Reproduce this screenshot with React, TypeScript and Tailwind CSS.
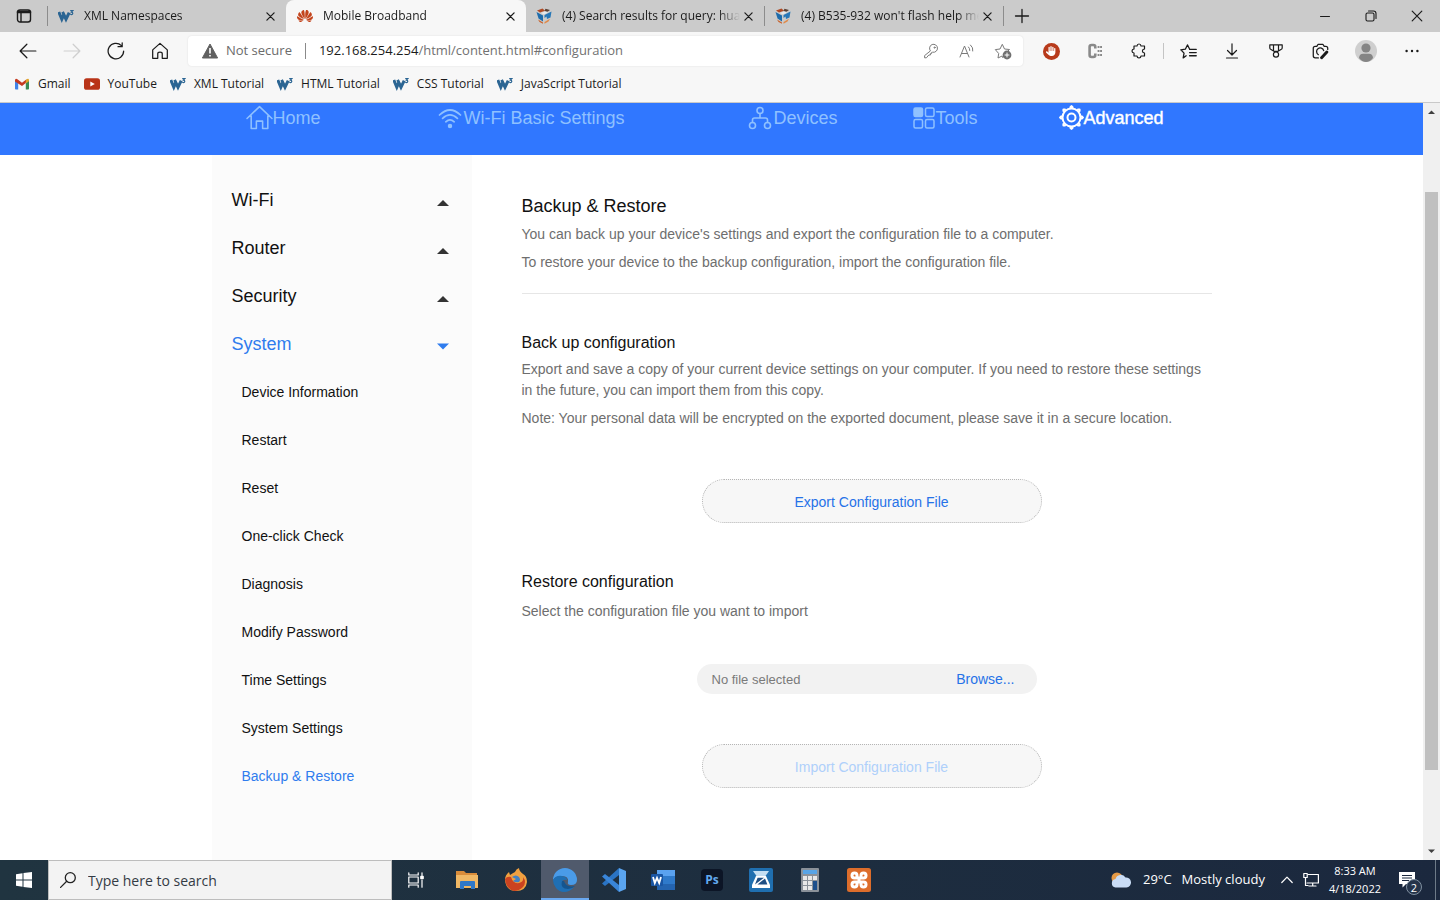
import type { ReactNode } from 'react';
import { FaHand } from 'react-icons/fa6';
import { SiHuawei } from 'react-icons/si';

const uiFont = 'font-["Open_Sans","Noto_Sans",sans-serif]';

type IconProps = { children: ReactNode; className?: string; box?: string; width?: number };

function Line({ children, className = 'size-4', box = '0 0 16 16', width = 1 }: IconProps) {
  return (
    <svg
      aria-hidden="true"
      viewBox={box}
      className={`shrink-0 ${className}`}
      fill="none"
      stroke="currentColor"
      strokeWidth={width}
      strokeLinecap="round"
      strokeLinejoin="round"
    >
      {children}
    </svg>
  );
}

function W3Icon() {
  return (
    <svg aria-hidden="true" viewBox="0 0 16 16" className="size-4 shrink-0" fill="none" stroke="#2b6593">
      <path d="M0.8 4 L3.8 11.2 L5.8 6.6 L8 11.2 L11.2 4.6" strokeWidth="3" />
      <path d="M4.4 4 L6.4 8" strokeWidth="2.4" />
      <path d="M12.2 2.6 H14.8 L13.4 4.2 C15.4 4.4 15 6.6 13.4 6.6 L12.2 6.2" strokeWidth="1.2" />
    </svg>
  );
}

function CubeIcon() {
  return (
    <svg aria-hidden="true" viewBox="0 0 16 16" className="size-4 shrink-0">
      <path d="M1 2.5 L6.5 0.5 L9 2.8 L4 4.6 Z" fill="#b04a24" />
      <path d="M9.5 0.8 L14 2 L11.5 3.8 L8.5 3 Z" fill="#5a4034" />
      <path d="M0.5 4 L7 7.5 V13.5 L2.5 10.5 Z" fill="#1f6cab" />
      <path d="M5 5 L9 3.6 L12 4.6 L8 6.6 Z" fill="#e6e9ec" />
      <path d="M8.5 7 L15.5 3.5 L14.5 9.5 L11 11 L10.5 8.5 L8.5 10 Z" fill="#2878b8" />
      <path d="M2 11.5 L7 14.5 V15.8 L3.5 14 Z" fill="#c8622c" />
      <path d="M8.5 14 L14 10.8 L12.5 13.5 L8.5 15.8 Z" fill="#e08a4a" />
    </svg>
  );
}

function CloseGlyph({ className = 'size-[9px]', width = 1.4 }: { className?: string; width?: number }) {
  return (
    <Line box="0 0 10 10" className={className} width={width}>
      <path d="M1 1 L9 9 M9 1 L1 9" />
    </Line>
  );
}

type TabProps = { icon: ReactNode; title: string; active?: boolean; className: string };

function Tab({ icon, title, active = false, className }: TabProps) {
  return (
    <div
      role="tab"
      aria-selected={active}
      className={`flex h-8 min-w-0 items-center pr-2 ${active ? 'rounded-t-lg bg-[#f7f7f7]' : ''} ${className}`}
    >
      {icon}
      <span className="ml-2.5 min-w-0 flex-1 overflow-hidden whitespace-nowrap [mask-image:linear-gradient(to_right,black_88%,transparent)]">
        {title}
      </span>
      <button aria-label={`Close ${title}`} className="flex size-4 items-center justify-center">
        <CloseGlyph />
      </button>
    </div>
  );
}

function TabSeparator() {
  return <span className="h-5 w-px shrink-0 bg-[#8c8c8c]" />;
}

function TabStrip() {
  return (
    <div className="flex h-8 items-center bg-[#cbcbcb] text-[12px] text-[#1b1b1b]">
      <button aria-label="Tab actions" className="flex w-[47px] justify-center">
        <Line width={1.4}>
          <rect x="1.5" y="2" width="13" height="12" rx="2.5" />
          <path d="M2 4 H14" strokeWidth="2.6" />
          <path d="M5 5 V13.5" />
        </Line>
      </button>
      <TabSeparator />
      <Tab icon={<W3Icon />} title="XML Namespaces" className="w-[238px] pl-2.5" />
      <Tab
        active
        icon={<SiHuawei aria-hidden="true" className="size-4 shrink-0 text-[#c3441c]" />}
        title="Mobile Broadband"
        className="w-[240px] pl-[11px]"
      />
      <Tab icon={<CubeIcon />} title="(4) Search results for query: huaw" className="w-[238px] pl-2.5" />
      <TabSeparator />
      <Tab icon={<CubeIcon />} title="(4) B535-932 won't flash help me" className="w-[238px] pl-2.5" />
      <TabSeparator />
      <button aria-label="New tab" className="flex w-9 justify-center">
        <Line width={1.3}>
          <path d="M8 1.5 V14.5 M1.5 8 H14.5" />
        </Line>
      </button>
      <div className="ml-auto flex items-center">
        <button aria-label="Minimize" className="flex w-[46px] justify-center">
          <Line>
            <path d="M3.5 8.5 H12.5" />
          </Line>
        </button>
        <button aria-label="Restore window" className="flex w-[46px] justify-center">
          <Line width={1.1}>
            <rect x="3" y="5" width="8" height="8" rx="1.5" />
            <path d="M5.5 3 H10.5 Q13 3 13 5.5 V10.5" />
          </Line>
        </button>
        <button aria-label="Close window" className="flex w-[46px] justify-center">
          <CloseGlyph className="size-3" width={1} />
        </button>
      </div>
    </div>
  );
}

function ToolButton({ label, children, className = 'w-11' }: { label: string; children: ReactNode; className?: string }) {
  return (
    <button aria-label={label} className={`flex h-8 shrink-0 items-center justify-center ${className}`}>
      {children}
    </button>
  );
}

function Toolbar() {
  return (
    <div className="flex h-[38px] items-center bg-[#f7f7f7] pl-1.5 text-[#1b1b1b]">
      <ToolButton label="Back">
        <Line className="size-[18px]" width={1.1}>
          <path d="M1 8 H15 M7 2 L1 8 L7 14" />
        </Line>
      </ToolButton>
      <ToolButton label="Forward">
        <Line className="size-[18px] text-[#cfcfcf]" width={1.1}>
          <path d="M1 8 H15 M9 2 L15 8 L9 14" />
        </Line>
      </ToolButton>
      <ToolButton label="Refresh">
        <Line className="size-[18px]" width={1.1}>
          <path d="M14.8 8 A6.9 6.9 0 1 1 12.8 3.2 M13.5 0.7 V4.2 H9.8" />
        </Line>
      </ToolButton>
      <ToolButton label="Home">
        <Line className="size-[18px]" width={1.1}>
          <path d="M1.5 7 L8 1.2 L14.5 7 V14.5 H10 V10.5 Q10 9 8 9 Q6 9 6 10.5 V14.5 H1.5 Z" />
        </Line>
      </ToolButton>
      <div className="ml-1.5 flex h-[30px] flex-1 items-center rounded bg-white pr-0.5 pl-3.5 text-[13px] shadow-[0_0_2px_#dddddd]">
        <svg aria-hidden="true" viewBox="0 0 16 16" className="size-4 shrink-0">
          <path d="M8 1 L15.6 15 H0.4 Z" fill="#606060" stroke="#606060" strokeLinejoin="round" />
          <path d="M8 5 V10.5 M8 12 V13.5" stroke="white" strokeWidth="1.6" />
        </svg>
        <span className="ml-2 whitespace-nowrap text-[#6b6b6b]">Not secure</span>
        <span className="mx-[13px] h-4 w-px bg-[#8a8a8a]" />
        <label htmlFor="address" className="whitespace-nowrap">
          192.168.254.254
        </label>
        <input
          id="address"
          type="text"
          defaultValue="/html/content.html#configuration"
          className="min-w-0 flex-1 bg-transparent text-[#717171] outline-none"
        />
        <div className="flex text-[#7a7a7a]">
          <ToolButton label="Saved passwords" className="w-9">
            <Line>
              <path d="M7.2 7.6 A4 4 0 1 1 9.6 9.2 L8.6 9.4 V10.6 H7.4 V12 H5.8 L3.4 14.8 H1.6 V13 Z" />
              <circle cx="11.6" cy="4.6" r="0.6" />
            </Line>
          </ToolButton>
          <ToolButton label="Read aloud" className="w-9">
            <Line>
              <path d="M1 14 L5.5 3 L10 14 M2.6 10.5 H8.4 M9.5 4 Q11 5.5 10.8 7.5 M11.5 2 Q14.5 4.5 13.8 8" />
            </Line>
          </ToolButton>
          <ToolButton label="Add to favorites" className="w-9">
            <svg aria-hidden="true" viewBox="0 0 18 18" className="size-[18px]" fill="none" stroke="currentColor">
              <path
                d="M9 16 L8 14 L4 16 L4.7 11.5 L1.3 7.6 L6 7 L8.3 2.3 L10.5 7 L15.5 7.5 L14 9"
                strokeLinejoin="round"
              />
              <circle cx="13" cy="13" r="4.4" fill="#6f6f6f" stroke="none" />
              <path d="M13 10.6 V15.4 M10.6 13 H15.4" stroke="white" />
            </svg>
          </ToolButton>
        </div>
      </div>
      <div className="flex items-center pl-1.5">
        <ToolButton label="Ad blocker">
          <span className="flex size-[17px] items-center justify-center rounded-full bg-[#b83a1b]">
            <FaHand aria-hidden="true" className="size-[10px] text-white" />
          </span>
        </ToolButton>
        <ToolButton label="Clipboard extension">
          <svg aria-hidden="true" viewBox="0 0 16 16" className="size-4" fill="none" stroke="#8a8a8a">
            <path
              d="M8.3 5.5 V4 Q8.3 2 6.3 2 H4.6 Q2.6 2 2.6 4 V12 Q2.6 14 4.6 14 H6.3 Q8.3 14 8.3 12 V10.5"
              strokeWidth="2.6"
            />
            <path d="M10.6 4 H15 M10.6 8 H15 M10.6 12 H15" strokeWidth="2" strokeDasharray="1.9 0.6" />
          </svg>
        </ToolButton>
        <ToolButton label="Extensions">
          <Line width={1.2}>
            <path d="M4.5 3 H6 Q6.2 1 8 1 Q9.8 1 10 3 H13.5 V6 Q11.4 6.2 11.4 8 Q11.4 9.8 13.5 10 V13 H10 Q9.8 15 8 15 Q6.2 15 6 13 H3 V10 Q1 9.8 1 8 Q1 6.2 3 6 V3 Z" />
          </Line>
        </ToolButton>
        <span className="mx-0.5 h-4 w-px bg-[#c4c4c4]" />
        <ToolButton label="Favorites">
          <Line className="size-[17px]" width={1.2}>
            <path d="M5.8 12 L3 14 L3.8 9.5 L0.8 6.4 L5 5.8 L7 1.8 L9 5.6 M9 6 H15.3 M9 9 H15.3 M9 12 H15.3" />
          </Line>
        </ToolButton>
        <ToolButton label="Downloads">
          <Line width={1.2}>
            <path d="M8 0.8 V11.5 M3.5 7.5 L8 12 L12.5 7.5 M2.5 15 H13.5" />
          </Line>
        </ToolButton>
        <ToolButton label="Rewards">
          <Line width={1.2}>
            <path d="M1.8 1.8 H14.2 V5 Q14.2 6.2 13 6.5 L10 8.3 H6 L3 6.5 Q1.8 6.2 1.8 5 Z M5.5 2 V7.5 M10.5 2 V7.5" />
            <circle cx="8" cy="11.6" r="2.6" />
          </Line>
        </ToolButton>
        <ToolButton label="Web capture">
          <Line className="size-[17px]" width={1.2}>
            <path d="M6 14 H3 Q1.2 14 1.2 12 V5 Q1.2 3.2 3 3.2 H4.5 L5.8 1.2 H10.2 L11.5 3.2 H13 Q14.8 3.2 14.8 5 V6" />
            <path d="M6 11 A3.4 3.4 0 1 1 11 7.2" />
            <path d="M14 8.5 L9 13.8" strokeWidth="2.8" />
          </Line>
        </ToolButton>
        <ToolButton label="Profile" className="w-12">
          <svg aria-hidden="true" viewBox="0 0 22 22" className="size-[22px]">
            <circle cx="11" cy="11" r="11" fill="#cfcfcf" />
            <circle cx="11" cy="8" r="4.6" fill="#858585" />
            <path d="M4 18 Q4.5 13.8 8 13.8 H14 Q17.5 13.8 18 18 Q15 22 11 22 Q7 22 4 18 Z" fill="#858585" />
          </svg>
        </ToolButton>
        <ToolButton label="Settings and more">
          <svg aria-hidden="true" viewBox="0 0 16 16" className="size-4" fill="currentColor">
            <circle cx="2.6" cy="8" r="1.2" />
            <circle cx="8" cy="8" r="1.2" />
            <circle cx="13.4" cy="8" r="1.2" />
          </svg>
        </ToolButton>
        <span className="w-1.5" />
      </div>
    </div>
  );
}

function GmailIcon() {
  return (
    <svg aria-hidden="true" viewBox="0 0 16 16" className="size-4 shrink-0">
      <path d="M1 4 L4.2 6.5 V13.5 H1.8 Q1 13.5 1 12.7 Z" fill="#3f83e8" />
      <path d="M15 4 L11.8 6.5 V13.5 H14.2 Q15 13.5 15 12.7 Z" fill="#3a8b53" />
      <path d="M1 4 Q1.6 2 3.4 3.2 L8 6.8 L12.6 3.2 L11.8 7 L8 10 L1 5.4 Z" fill="#c5391f" />
      <path d="M11.8 4 Q14.6 1.6 15 4 V5.2 L11.8 7.4 Z" fill="#e0a52a" />
    </svg>
  );
}

function YouTubeIcon() {
  return (
    <svg aria-hidden="true" viewBox="0 0 16 16" className="size-4 shrink-0">
      <rect x="0" y="2.2" width="16" height="11.6" rx="2.6" fill="#b93418" />
      <path d="M6.3 5.5 L10.8 8 L6.3 10.5 Z" fill="white" />
    </svg>
  );
}

const bookmarks = [
  { label: 'Gmail', icon: <GmailIcon /> },
  { label: 'YouTube', icon: <YouTubeIcon /> },
  { label: 'XML Tutorial', icon: <W3Icon /> },
  { label: 'HTML Tutorial', icon: <W3Icon /> },
  { label: 'CSS Tutorial', icon: <W3Icon /> },
  { label: 'JavaScript Tutorial', icon: <W3Icon /> },
];

function BookmarksBar() {
  return (
    <div className="flex h-[33px] items-center gap-[13px] border-b border-[#c9c9c9] bg-[#f7f7f7] pb-1 pl-3.5 text-[12px] text-[#1b1b1b]">
      {bookmarks.map((b) => (
        <a key={b.label} href="#" className="flex items-center gap-2 whitespace-nowrap">
          {b.icon}
          {b.label}
        </a>
      ))}
    </div>
  );
}

const gearTeeth = [0, 45, 90, 135, 180, 225, 270, 315];

const navItems = [
  {
    label: 'Home',
    icon: (
      <Line box="0 0 26 26" className="size-[27px]" width={1.5}>
        <path d="M1 14 L13 2.5 L25 14 M5 11 V23.5 H10 V16.5 H16 V23.5 H21 V11" />
      </Line>
    ),
  },
  {
    label: 'Wi-Fi Basic Settings',
    icon: (
      <Line box="0 0 24 24" className="mr-0.5 size-6" width={1.7}>
        <path d="M1.5 9 Q12 -1 22.5 9 M4.6 12.4 Q12 5.4 19.4 12.4 M7.8 15.8 Q12 12 16.2 15.8" />
        <circle cx="12" cy="20" r="1.4" fill="currentColor" />
      </Line>
    ),
  },
  {
    label: 'Devices',
    icon: (
      <Line box="0 0 24 24" className="mr-0.5 size-6" width={1.6}>
        <circle cx="12" cy="4.5" r="3" />
        <circle cx="4.5" cy="19.5" r="3" />
        <circle cx="19.5" cy="19.5" r="3" />
        <path d="M12 7.5 V12 M4.5 16.5 V14 Q4.5 12 6.5 12 H17.5 Q19.5 12 19.5 14 V16.5" />
      </Line>
    ),
  },
  {
    label: 'Tools',
    icon: (
      <Line box="0 0 24 24" className="size-6" width={1.5}>
        <rect x="2" y="2" width="8.5" height="8.5" rx="1.5" fill="currentColor" />
        <rect x="13.5" y="2" width="8.5" height="8.5" rx="1.5" />
        <rect x="2" y="13.5" width="8.5" height="8.5" rx="1.5" />
        <rect x="13.5" y="13.5" width="8.5" height="8.5" rx="1.5" />
      </Line>
    ),
  },
  {
    label: 'Advanced',
    active: true,
    icon: (
      <Line box="0 0 25 25" className="size-[25px]" width={2}>
        <circle cx="12.5" cy="12.5" r="9" />
        <circle cx="12.5" cy="12.5" r="4" />
        {gearTeeth.map((a) => (
          <path key={a} d="M11.5 2.2 L12.5 1.2 L13.5 2.2" transform={`rotate(${a} 12.5 12.5)`} strokeWidth="2.2" />
        ))}
      </Line>
    ),
  },
];

function RouterNav() {
  return (
    <nav className="bg-[#3077ff]">
      <ul className="mx-auto grid h-[52px] max-w-[1000px] grid-cols-[192px_310px_164px_147px_auto] pt-px pl-[34px] text-[18px] leading-[26px]">
        {navItems.map((item) => (
          <li key={item.label}>
            <a
              href="#"
              className={`flex h-[27px] items-center whitespace-nowrap ${
                item.active ? 'text-white [-webkit-text-stroke:0.4px_white]' : 'text-[#8fc1ff]'
              }`}
            >
              {item.icon}
              {item.label}
            </a>
          </li>
        ))}
      </ul>
    </nav>
  );
}

const sections = ['Wi-Fi', 'Router', 'Security', 'System'];
const systemPages = [
  'Device Information',
  'Restart',
  'Reset',
  'One-click Check',
  'Diagnosis',
  'Modify Password',
  'Time Settings',
  'System Settings',
  'Backup & Restore',
];

function Sidebar() {
  return (
    <aside className="w-[260px] shrink-0 bg-[#fbfbfb] pt-[21px]">
      {sections.map((s) => {
        const open = s === 'System';
        return (
          <button
            key={s}
            aria-expanded={open}
            className={`flex h-12 w-full items-center justify-between pr-[23px] pl-5 text-[18px] ${
              open ? 'text-[#2f7cee]' : 'text-[#111111]'
            }`}
          >
            {s}
            <svg
              aria-hidden="true"
              viewBox="0 0 12 12"
              className={`size-3 ${open ? '' : 'text-[#333333]'}`}
              fill="currentColor"
            >
              <path d={open ? 'M0 5.5 L6 11.5 L12 5.5 Z' : 'M0 12 L6 6 L12 12 Z'} />
            </svg>
          </button>
        );
      })}
      <ul className="pl-[30px] text-[14px]">
        {systemPages.map((p) => (
          <li key={p}>
            <a
              href="#"
              className={`flex h-12 items-center ${p === 'Backup & Restore' ? 'text-[#2f7cee]' : 'text-[#111111]'}`}
            >
              {p}
            </a>
          </li>
        ))}
      </ul>
    </aside>
  );
}

const pill = 'block h-11 w-[340px] rounded-full border border-dotted border-[#b5b5b5] bg-[#f7f7f7] pt-0.5 text-[14px]';

function BackupPanel() {
  return (
    <main className="min-w-0 flex-1 pt-[39px] pb-12 pl-[50px] text-[14px] leading-[21px] text-[#6e6e6e]">
      <h1 className="text-[18px] leading-6 text-[#111111]">Backup &amp; Restore</h1>
      <p className="mt-1.5">You can back up your device's settings and export the configuration file to a computer.</p>
      <p className="mt-[7px]">To restore your device to the backup configuration, import the configuration file.</p>
      <hr className="mt-5 border-[#e6e6e6]" />

      <h2 className="mt-[37px] text-[16px] leading-6 text-[#111111]">Back up configuration</h2>
      <p className="mt-1">
        Export and save a copy of your current device settings on your computer. If you need to restore these settings
        in the future, you can import them from this copy.
      </p>
      <p className="mt-[7px]">
        Note: Your personal data will be encrypted on the exported document, please save it in a secure location.
      </p>
      <div className="mt-[50px] flex justify-center pl-2.5">
        <button className={`${pill} text-[#2672e8]`}>Export Configuration File</button>
      </div>

      <h2 className="mt-[47px] text-[16px] leading-6 text-[#111111]">Restore configuration</h2>
      <p className="mt-[7px]">Select the configuration file you want to import</p>
      <div className="mx-auto mt-[42px] flex h-[30px] w-[340px] items-center justify-between rounded-full bg-[#f2f2f2] pr-[22px] pl-[15px]">
        <span className="text-[13px] text-[#7a7a7a]">No file selected</span>
        <label htmlFor="config-file" className="cursor-pointer text-[#2672e8]">
          Browse...
        </label>
        <input id="config-file" type="file" className="sr-only" />
      </div>
      <div className="mt-[50px] flex justify-center pl-2.5">
        <button disabled className={`${pill} text-[#afd0fb]`}>
          Import Configuration File
        </button>
      </div>
    </main>
  );
}

function Scrollbar() {
  return (
    <div aria-hidden="true" className="flex w-[17px] shrink-0 flex-col items-center bg-[#f0f0f0] text-[#404040]">
      <svg viewBox="0 0 17 17" className="size-[17px]" fill="currentColor">
        <path d="M5 11 L8.5 7.5 L12 11 Z" />
      </svg>
      <span className="h-[72px]" />
      <span className="w-[13px] flex-1 bg-[#c0c0c0]" />
      <span className="h-[73px]" />
      <svg viewBox="0 0 17 17" className="size-[17px]" fill="currentColor">
        <path d="M5 6.5 L8.5 10 L12 6.5 Z" />
      </svg>
    </div>
  );
}

const taskbarApps = [
  {
    name: 'File Explorer',
    icon: (
      <svg viewBox="0 0 24 24" className="size-6">
        <path d="M1 3 H9 L11 5 H22 V20 H1 Z" fill="#d98c3a" />
        <path d="M1 7 H23 V20 H1 Z" fill="#f0b865" />
        <path d="M5 21 V14 Q5 13 6 13 H19 Q20 13 20 14 V21 H16 V18 H9 V21 Z" fill="#2f78c8" />
      </svg>
    ),
  },
  {
    name: 'Firefox',
    icon: (
      <svg viewBox="0 0 24 24" className="size-6">
        <path d="M1 12 Q1 7 5 4 L6 7 Q9 5 11 4 Q12 1 15 0 Q15 3 19 6 Q23 8 23 14 Q22 23 12 23 Q2 23 1 12 Z" fill="#f0a040" />
        <path d="M1 11 Q3 8 7 9 Q9 16 15 15 Q20 14 19 9 Q23 14 19 19 Q15 23 10 23 Q2 21 1 11 Z" fill="#cb4320" />
        <path d="M8 9 Q12 6 15 9 Q17 12 15 14 Q12 15 9 13 L12 11 Z" fill="#4281c4" />
      </svg>
    ),
  },
  {
    name: 'Microsoft Edge',
    active: true,
    icon: (
      <svg viewBox="0 0 24 24" className="size-6">
        <path d="M0 12 A12 12 0 0 1 24 12 Q24 17 18 17 Q14 17 15 14 Q16 8 9 8 Q2 8 0 12 Z" fill="#4a9be8" />
        <path d="M0 12 Q3 7 9 8 Q14 9 14 12 Q8 11 9 16 Q12 22 21 19 Q17 24 11 24 A12 12 0 0 1 0 12 Z" fill="#1f6fb4" />
        <path d="M9 13 Q7 21 15 21 Q19 21 22 18 Q13 20 11 13 Z" fill="#15558f" />
      </svg>
    ),
  },
  {
    name: 'Visual Studio Code',
    icon: (
      <svg viewBox="0 0 24 24" className="size-6">
        <path d="M17 0 L24 3 V21 L17 24 Z" fill="#5aa5f0" />
        <path d="M17 0 V7 L3 18 L0 15.5 Z" fill="#2a74c4" />
        <path d="M17 24 V17 L3 6 L0 8.5 Z" fill="#3985d8" />
      </svg>
    ),
  },
  {
    name: 'Word',
    icon: (
      <svg viewBox="0 0 24 24" className="size-6">
        <path d="M6 2 H24 V8 H6 Z" fill="#5aa2f0" />
        <path d="M6 8 H24 V16 H6 Z" fill="#2f7acb" />
        <path d="M6 16 H24 V22 H6 Z" fill="#2464b0" />
        <rect x="0" y="6" width="12" height="12" rx="1" fill="#1a56a4" />
        <path d="M2 9 L3.8 15 L6 9.8 L8.2 15 L10 9" fill="none" stroke="white" strokeWidth="1.8" />
      </svg>
    ),
  },
  {
    name: 'Photoshop',
    icon: (
      <span className="flex size-[22px] items-center justify-center rounded bg-[#0c1526] text-[12px] font-bold text-[#62a9ee]">
        Ps
      </span>
    ),
  },
  {
    name: 'Scanner',
    icon: (
      <svg viewBox="0 0 24 24" className="size-6">
        <rect width="24" height="24" rx="2" fill="#1f6fb0" />
        <path d="M4 3 H20 L16.5 8 H7.5 Z" fill="#c4def2" />
        <path d="M7 8 H17 L21 17 V20 H3 V17 Z" fill="white" />
        <path d="M8.6 9.8 H15 L6 16.4 Z M16 10.6 L18.4 16.4 H8.4 Z" fill="#1f4f84" />
      </svg>
    ),
  },
  {
    name: 'Calculator',
    icon: (
      <svg viewBox="0 0 24 24" className="size-6">
        <rect x="3" width="18" height="24" rx="1" fill="#8a9199" />
        <rect x="5" y="2" width="14" height="4" fill="#58a4e6" />
        <path
          d="M5 8 H9 V12 H5 Z M10 8 H14 V12 H10 Z M15 8 H19 V12 H15 Z M5 13 H9 V17 H5 Z M10 13 H14 V17 H10 Z M5 18 H9 V22 H5 Z M10 18 H14 V22 H10 Z"
          fill="#e8e8e8"
        />
        <rect x="15" y="13" width="4" height="9" fill="#1c4f8c" />
      </svg>
    ),
  },
  {
    name: 'XAMPP',
    icon: (
      <svg viewBox="0 0 24 24" className="size-6" fill="none">
        <rect width="24" height="24" rx="2.5" fill="#dd6d2b" />
        <path
          d="M10 9.5 V7.5 A2.5 2.5 0 1 0 7.5 10 H16.5 A2.5 2.5 0 1 0 14 7.5 V9.5 M10 14.5 V16.5 A2.5 2.5 0 1 1 7.5 14 H16.5 A2.5 2.5 0 1 1 14 16.5 V14.5"
          stroke="white"
          strokeWidth="3"
        />
        <path d="M12 9 V15" stroke="white" strokeWidth="3" />
      </svg>
    ),
  },
];

function Taskbar() {
  return (
    <footer className="flex h-10 shrink-0 items-stretch bg-linear-to-r from-[#203440] to-[#1b283e] text-white">
      <button aria-label="Start" className="flex w-12 items-center justify-center">
        <svg viewBox="0 0 16 16" className="size-4" fill="white">
          <path d="M0 2.2 L6.5 1.3 V7.5 H0 Z M7.5 1.1 L16 0 V7.5 H7.5 Z M0 8.5 H6.5 V14.7 L0 13.8 Z M7.5 8.5 H16 V16 L7.5 14.9 Z" />
        </svg>
      </button>
      <label className="flex w-[344px] items-center gap-3 border border-[#bdbdbd] bg-[#f3f3f3] px-[11px] text-[#222222]">
        <Line className="size-4" width={1.3}>
          <circle cx="10.3" cy="5.7" r="5" />
          <path d="M6.7 9.3 L0.6 15.4" />
        </Line>
        <input
          type="search"
          aria-label="Search"
          placeholder="Type here to search"
          className="min-w-0 flex-1 bg-transparent text-[14px] outline-none placeholder:text-[#333b44]"
        />
      </label>
      <button aria-label="Task view" className="mr-[3px] flex w-12 items-center justify-center">
        <Line width={1.2}>
          <path d="M0.8 0.8 V3 H10.2 V0.8 M0.8 5 H10.2 V11 H0.8 Z M0.8 15.2 V13 H10.2 V15.2 M14 0.8 V3.4 M14 8 V15.2" />
          <path d="M12.8 4.4 H15.2 V6.6 H12.8 Z" fill="white" />
        </Line>
      </button>
      <div className="flex gap-px">
        {taskbarApps.map((app) => (
          <button
            key={app.name}
            aria-label={app.name}
            className={`flex w-12 items-center justify-center ${
              app.active ? 'border-b-2 border-[#6aa8f0] bg-[#505a6c] pt-0.5' : ''
            }`}
          >
            {app.icon}
          </button>
        ))}
      </div>
      <div className="ml-auto flex items-center pr-1 text-[13px]">
        <button className="flex items-center gap-2.5 whitespace-nowrap">
          <svg aria-hidden="true" viewBox="0 0 20 16" className="mr-0.5 h-4 w-5">
            <circle cx="6" cy="6" r="5.5" fill="#e69a45" />
            <path d="M4.5 15.5 A4.3 4.3 0 0 1 4.5 7 A5.5 5.5 0 0 1 14.5 5.5 A5 5 0 0 1 15.5 15.5 Z" fill="#c9dcf5" />
          </svg>
          <span>29°C</span>
          <span>Mostly cloudy</span>
        </button>
        <button aria-label="Show hidden icons" className="ml-4 flex w-3 justify-center">
          <Line box="0 0 12 12" className="size-3" width={1.2}>
            <path d="M0.8 8.5 L6 3.2 L11.2 8.5" />
          </Line>
        </button>
        <button aria-label="Network" className="ml-2.5">
          <Line className="size-4" width={1.2}>
            <path d="M5 2.5 H15.4 V11 H4 M9.7 11 V14 M6 14 H13 M2.5 6 V13.5 H5" />
            <path d="M0.8 1.5 H4.2 V5.5 H0.8 Z" />
          </Line>
        </button>
        <button className="ml-2.5 text-center text-[11px] leading-[18px] whitespace-nowrap">
          <span className="block">8:33 AM</span>
          <span className="block">4/18/2022</span>
        </button>
        <button aria-label="Notifications" className="relative mr-5 ml-[18px]">
          <svg viewBox="0 0 16 16" className="size-4">
            <path d="M0 0 H16 V12 H7 L3.5 15.5 V12 H0 Z" fill="white" />
            <path d="M3 3.5 H13 M3 6 H13 M3 8.5 H10" stroke="#1b283e" />
          </svg>
          <span className="absolute top-[7px] left-[7px] flex size-4 items-center justify-center rounded-full border border-[#8090a0] bg-[#25344a] text-[11px] leading-none">
            2
          </span>
        </button>
        <span className="h-10 w-px bg-[#6d7a88]" />
      </div>
    </footer>
  );
}

export default function App() {
  return (
    <div className={`flex min-h-screen flex-col bg-white ${uiFont}`}>
      <header>
        <TabStrip />
        <Toolbar />
        <BookmarksBar />
      </header>
      <div className="flex flex-1 font-['Liberation_Sans',Arial,sans-serif]">
        <div className="flex min-w-0 flex-1 flex-col">
          <RouterNav />
          <div className="mx-auto flex w-full max-w-[1000px] flex-1">
            <Sidebar />
            <BackupPanel />
          </div>
        </div>
        <Scrollbar />
      </div>
      <Taskbar />
    </div>
  );
}
